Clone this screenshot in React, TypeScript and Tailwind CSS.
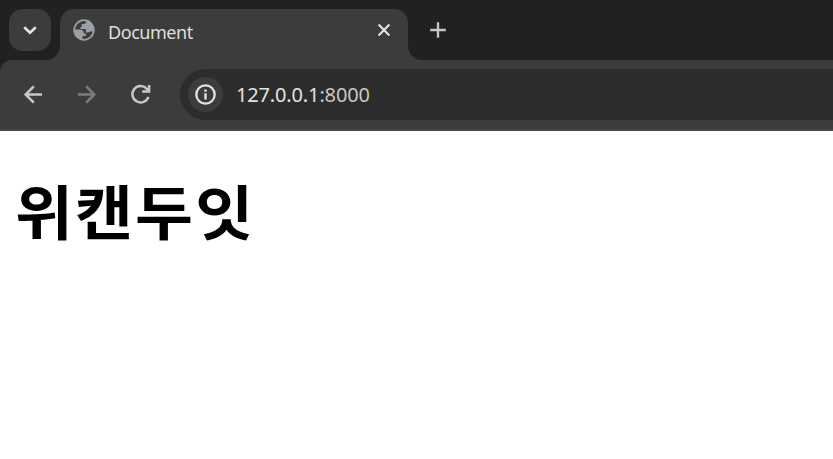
function TabSearch() {
  return (
    <button className="ml-[9px] mt-[9px] flex h-[42px] w-[42px] shrink-0 items-center justify-center rounded-[14px] bg-[#3c3c3c]">
      <svg width="42" height="42" viewBox="0 0 42 42" fill="none" stroke="#e3e3e3" strokeWidth="2.6">
        <path d="M15.2 18.2L21 23.8L26.8 18.2" />
      </svg>
    </button>
  );
}

function Globe() {
  return (
    <svg className="ml-[13px] mt-[10px] shrink-0" width="22" height="22" viewBox="0 0 22 22">
      <circle cx="11" cy="11" r="9.8" fill="none" stroke="#9aa0a6" strokeWidth="1.8" />
      <path
        fill="#9aa0a6"
        d="M13 1.5V3C13 4.2 12 5 10.8 5H8.8V7C8.8 7.8 8.1 8.2 7.4 8.2V10H11.6C12.4 10 13 10.6 13 11.4V13.4H14.3C15.3 13.4 16 13.2 16.8 12.6L20.5 12.5L21 11C20.8 6 17.5 2.2 13 1.5Z"
      />
      <path
        fill="#9aa0a6"
        d="M1.3 10.6H6.6C9.4 10.6 10.9 12 10.9 14.4H12.9V17H9.6V20.8C5 20.3 1.1 16.7 1.3 10.6Z"
      />
    </svg>
  );
}

function TabStrip() {
  return (
    <div className="flex h-[60px] bg-[#202221]">
      <TabSearch />
      <div className="relative ml-[9px] mt-[9px] flex h-[51px] w-[348px] shrink-0 rounded-t-[14px] bg-[#3c3c3c]">
        <svg className="absolute -left-[14px] bottom-0" width="14" height="14" fill="#3c3c3c">
          <path d="M14 0V14H0A14 14 0 0 0 14 0Z" />
        </svg>
        <svg className="absolute -right-[14px] bottom-0" width="14" height="14" fill="#3c3c3c">
          <path d="M0 0V14H14A14 14 0 0 1 0 0Z" />
        </svg>
        <Globe />
        <span className="ml-[13px] mt-[10px] h-[26px] text-[18px] leading-[26px] tracking-[-0.45px] text-[#dfdfdf]">
          Document
        </span>
        <svg className="ml-auto mr-[14px] mt-[11px]" width="20" height="20" fill="none" stroke="#e3e3e3" strokeWidth="2.1">
          <path d="M4.6 4.6L15.4 15.4M15.4 4.6L4.6 15.4" />
        </svg>
      </div>
      <svg className="ml-[20px] mt-[20px]" width="20" height="20" fill="none" stroke="#c7c7c7" strokeWidth="2.3">
        <path d="M10 2.2V17.8M2.2 10H17.8" />
      </svg>
    </div>
  );
}

function Toolbar() {
  return (
    <div className="bg-[#202221]">
      <div className="flex h-[71px] items-start rounded-tl-[12px] border-b-2 border-[#4a4748] bg-[#3c3c3c]">
        <svg className="ml-[22px] mt-[23px] shrink-0" width="22" height="22" fill="none" stroke="#c7c7c7" strokeWidth="2.5">
          <path d="M20 11.5H3M11.8 3.3L3.6 11.5L11.8 19.7" />
        </svg>
        <svg className="ml-[32px] mt-[23px] shrink-0" width="22" height="22" fill="none" stroke="#7d7d7d" strokeWidth="2.5">
          <path d="M2 11.5H19M10.2 3.3L18.4 11.5L10.2 19.7" />
        </svg>
        <svg className="ml-[32px] mt-[23px] shrink-0" width="22" height="22" fill="none" stroke="#c7c7c7" strokeWidth="2.5">
          <path d="M18.4 13.8A8.2 8.2 0 1 1 16.6 5.6L19 8" />
          <path d="M19.1 2V8.6H12.2" />
        </svg>
        <div className="ml-[28px] mt-[9px] flex h-[51px] flex-1 items-center rounded-l-full bg-[#2c2c2c] pl-2">
          <div className="flex h-[35px] w-[35px] items-center justify-center rounded-full bg-[#3c3c3c]">
            <svg width="21" height="21" fill="none" stroke="#e3e3e3">
              <circle cx="10.5" cy="10.5" r="9.2" strokeWidth="2.3" />
              <path d="M10.5 9.3V15.5M10.5 5.5V7.8" strokeWidth="2.4" />
            </svg>
          </div>
          <span className="ml-[13px] text-[20px] leading-[28px] tracking-[-0.15px] text-[#e3e3e3]">
            127.0.0.1<span className="text-[#c7c7c7]">:8000</span>
          </span>
        </div>
      </div>
    </div>
  );
}

export default function App() {
  return (
    <div className="h-[459px] w-[833px] overflow-hidden bg-white font-['Noto_Sans','Open_Sans',sans-serif]">
      <TabStrip />
      <Toolbar />
      <main className="px-[15px] pt-[35px]">
        <h1 className="w-fit scale-y-[0.94] font-['Noto_Sans_CJK_KR',sans-serif] text-[63px] font-bold leading-[88px] tracking-[2.1px] text-black">
          위캔두잇
        </h1>
      </main>
    </div>
  );
}
